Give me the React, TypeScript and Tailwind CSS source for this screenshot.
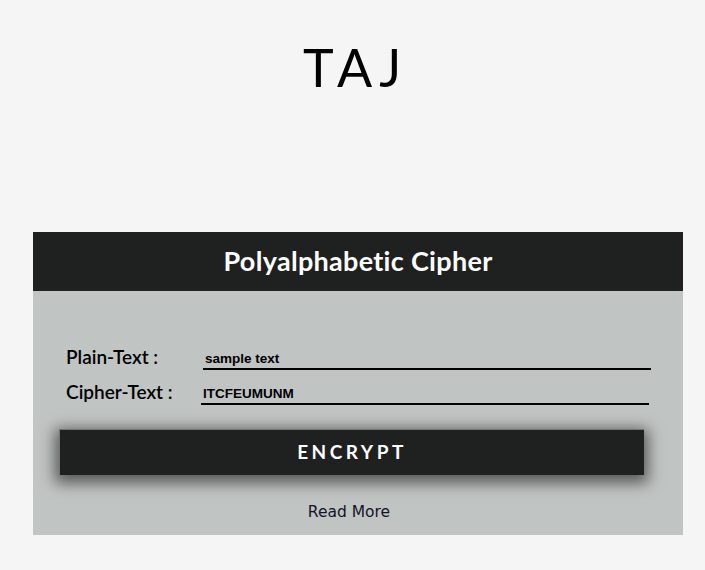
import React, { useState } from "react";

const App = () => {
	const [plain, setPlain] = useState("sample text");
	const [cipher, setCipher] = useState("ITCFEUMUNM");

	return (
		<div className="min-h-[570px] w-full bg-[#f5f5f5] font-['Lato',sans-serif]">
			<h1 className="pt-[38px] pl-[6px] text-center text-[52px] leading-[58px] tracking-[7px] text-black font-normal">
				TAJ
			</h1>
			<div className="mt-[136px] ml-[33px] w-[650px]">
				<div className="flex h-[59px] items-center justify-center bg-[#1f2020]">
					<h2 className="text-[27px] font-bold tracking-[0.3px] text-white">
						Polyalphabetic Cipher
					</h2>
				</div>
				<div className="bg-[#c0c4c3] pt-[55px] pb-[12px]">
					<div className="flex items-end pl-[33px]">
						<label className="w-[137px] pb-[2px] text-[19px] font-semibold leading-[22px] text-black">
							Plain-Text :
						</label>
						<input
							value={plain}
							onChange={(e) => setPlain(e.target.value)}
							className="h-[22px] w-[448px] border-b-2 border-black bg-transparent pl-[2px] pt-[1px] font-['Liberation_Sans',sans-serif] text-[13.5px] font-bold text-black outline-none"
						/>
					</div>
					<div className="mt-[11px] flex items-end pl-[33px]">
						<label className="w-[135px] pb-[2px] text-[19px] font-semibold leading-[22px] text-black">
							Cipher-Text :
						</label>
						<input
							value={cipher}
							onChange={(e) => setCipher(e.target.value)}
							className="h-[22px] w-[448px] border-b-2 border-black bg-transparent pl-[2px] font-['Liberation_Sans',sans-serif] text-[13.5px] font-bold text-black outline-none"
						/>
					</div>
					<button
						type="button"
						className="mt-[24px] ml-[26px] flex h-[46px] w-[585px] items-center justify-center border-t border-l border-[#767676] bg-[#1f2020] text-[19px] font-bold tracking-[3.5px] text-white shadow-[0_4px_14px_4px_rgba(0,0,0,0.55)]"
					>
						ENCRYPT
					</button>
					<p className="mt-[26px] ml-[-18px] text-center font-['DejaVu_Sans',sans-serif] text-[15.5px] font-normal leading-[22px] text-[#141428]">
						Read More
					</p>
				</div>
			</div>
		</div>
	);
};

export default App;
